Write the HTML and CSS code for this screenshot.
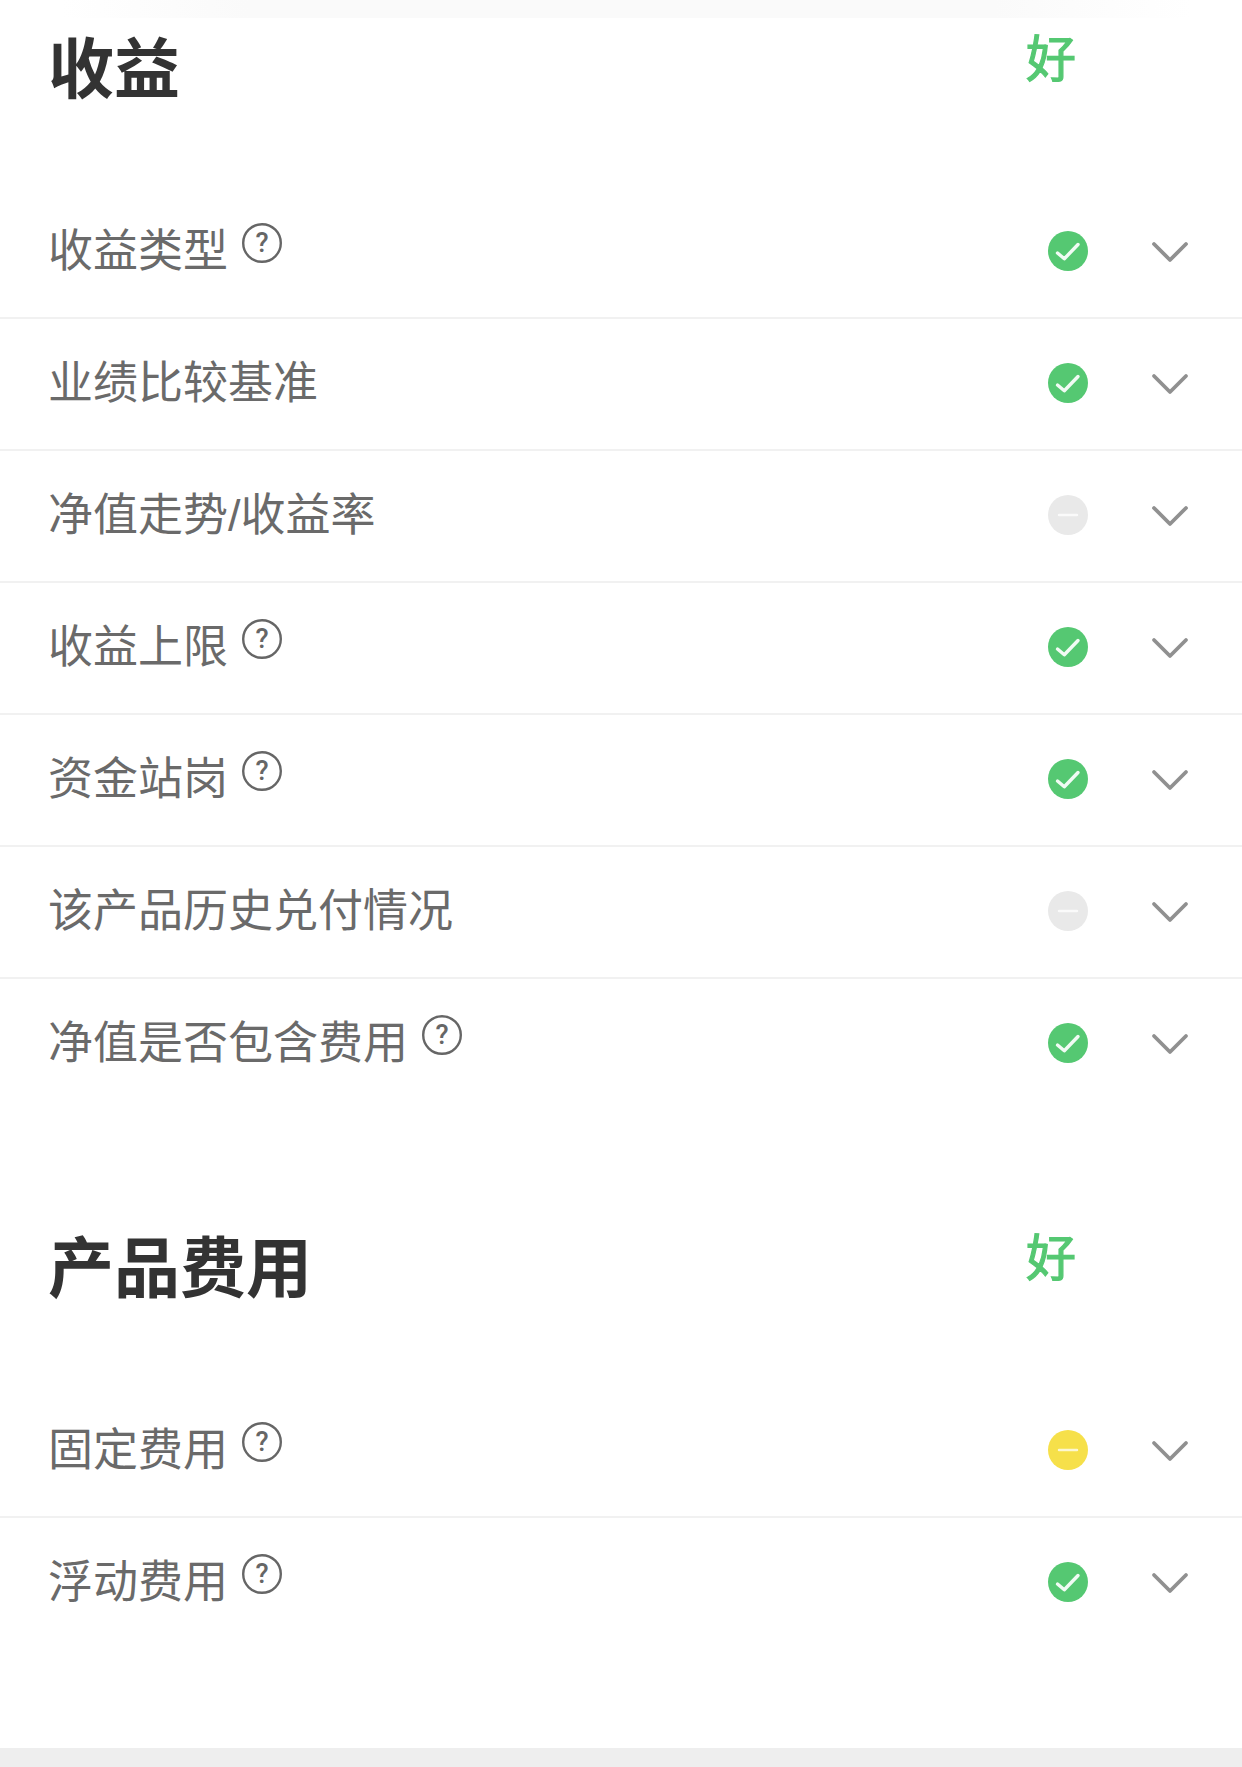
FILE: index.html
```html
<!DOCTYPE html>
<html lang="zh-CN">
<head>
    <meta charset="UTF-8">
    <meta name="viewport" content="width=device-width, initial-scale=1.0">
    <title>收益</title>
    <link rel="stylesheet" href="styles.css">
</head>
<body>
    <svg class="icon-defs" width="0" height="0">
        <symbol id="i-help" viewBox="0 0 40 40">
            <circle cx="20" cy="20" r="18.8" fill="none" stroke="#666" stroke-width="2.4"/>
        </symbol>
        <symbol id="i-ok" viewBox="0 0 40 40">
            <circle cx="20" cy="20" r="20" fill="#55c872"/>
            <path d="M9.5 22 L16.3 27.8 L30 13.5" fill="none" stroke="#fff" stroke-width="3.4" stroke-linecap="round" stroke-linejoin="round" opacity="0.92"/>
        </symbol>
        <symbol id="i-none" viewBox="0 0 40 40">
            <circle cx="20" cy="20" r="20" fill="#e9e9e9"/>
            <path d="M11 20 H29" stroke="#fff" stroke-width="2.5" stroke-linecap="round" opacity="0.8"/>
        </symbol>
        <symbol id="i-warn" viewBox="0 0 40 40">
            <circle cx="20" cy="20" r="20" fill="#f6e04a"/>
            <path d="M11 20 H29" stroke="#fff" stroke-width="2.5" stroke-linecap="round" opacity="0.75"/>
        </symbol>
        <symbol id="i-down" viewBox="0 0 38 22">
            <path d="M3 3 L19 19 L35 3" fill="none" stroke="#909090" stroke-width="3.8" stroke-linecap="round" stroke-linejoin="round"/>
        </symbol>
    </svg>

    <div class="top-strip"></div>

    <section class="section">
        <div class="section-head">
            <h2 class="section-title">收益</h2>
            <span class="section-grade">好</span>
        </div>
        <div class="row">
            <span class="row-label">收益类型</span>
            <span class="help"><svg class="help-ring"><use href="#i-help"/></svg><span class="help-mark">?</span></span>
            <svg class="status"><use href="#i-ok"/></svg>
            <svg class="chevron"><use href="#i-down"/></svg>
        </div>
        <div class="row">
            <span class="row-label">业绩比较基准</span>
            <svg class="status"><use href="#i-ok"/></svg>
            <svg class="chevron"><use href="#i-down"/></svg>
        </div>
        <div class="row">
            <span class="row-label">净值走势/收益率</span>
            <svg class="status"><use href="#i-none"/></svg>
            <svg class="chevron"><use href="#i-down"/></svg>
        </div>
        <div class="row">
            <span class="row-label">收益上限</span>
            <span class="help"><svg class="help-ring"><use href="#i-help"/></svg><span class="help-mark">?</span></span>
            <svg class="status"><use href="#i-ok"/></svg>
            <svg class="chevron"><use href="#i-down"/></svg>
        </div>
        <div class="row">
            <span class="row-label">资金站岗</span>
            <span class="help"><svg class="help-ring"><use href="#i-help"/></svg><span class="help-mark">?</span></span>
            <svg class="status"><use href="#i-ok"/></svg>
            <svg class="chevron"><use href="#i-down"/></svg>
        </div>
        <div class="row">
            <span class="row-label">该产品历史兑付情况</span>
            <svg class="status"><use href="#i-none"/></svg>
            <svg class="chevron"><use href="#i-down"/></svg>
        </div>
        <div class="row">
            <span class="row-label">净值是否包含费用</span>
            <span class="help"><svg class="help-ring"><use href="#i-help"/></svg><span class="help-mark">?</span></span>
            <svg class="status"><use href="#i-ok"/></svg>
            <svg class="chevron"><use href="#i-down"/></svg>
        </div>
    </section>

    <section class="section section-fees">
        <div class="section-head">
            <h2 class="section-title">产品费用</h2>
            <span class="section-grade">好</span>
        </div>
        <div class="row">
            <span class="row-label">固定费用</span>
            <span class="help"><svg class="help-ring"><use href="#i-help"/></svg><span class="help-mark">?</span></span>
            <svg class="status"><use href="#i-warn"/></svg>
            <svg class="chevron"><use href="#i-down"/></svg>
        </div>
        <div class="row">
            <span class="row-label">浮动费用</span>
            <span class="help"><svg class="help-ring"><use href="#i-help"/></svg><span class="help-mark">?</span></span>
            <svg class="status"><use href="#i-ok"/></svg>
            <svg class="chevron"><use href="#i-down"/></svg>
        </div>
    </section>

    <div class="bottom-band"></div>
</body>
</html>
```

FILE: styles.css
```css
* {
    margin: 0;
    padding: 0;
    box-sizing: border-box;
}

body {
    font-family: "Liberation Sans", "Noto Sans CJK SC", sans-serif;
    background: #fff;
    height: 1767px;
    overflow: hidden;
    display: flex;
    flex-direction: column;
}

.icon-defs {
    position: absolute;
}

.top-strip {
    height: 18px;
    background: linear-gradient(90deg, #fff 5%, #fafafa 20%, #fafafa 80%, #fff 96%);
}

.section-head {
    height: 169px;
    padding: 0 166px 0 48px;
    display: flex;
    align-items: flex-start;
    justify-content: space-between;
}

.section-title {
    font-size: 66px;
    font-weight: 700;
    line-height: 104px;
    color: #333;
}

.section-grade {
    font-size: 50px;
    line-height: 84px;
    color: #55c872;
    -webkit-text-stroke: 1.2px #55c872;
}

.row {
    height: 132px;
    padding: 0 53px 2px 48px;
    display: flex;
    align-items: center;
    border-bottom: 2px solid #f1f1f1;
}

.row:last-child {
    padding-bottom: 4px;
    border-bottom: none;
}

.row-label {
    margin-top: 2px;
    font-size: 45px;
    line-height: 60px;
    color: #6a6a6a;
}

.help {
    width: 40px;
    height: 40px;
    margin: -16px 0 0 14px;
    position: relative;
    display: flex;
    align-items: center;
    justify-content: center;
}

.help-ring {
    position: absolute;
    inset: 0;
    width: 40px;
    height: 40px;
}

.help-mark {
    font-family: Roboto, sans-serif;
    font-size: 27px;
    font-weight: 500;
    line-height: 1;
    color: #666;
}

.status {
    width: 40px;
    height: 40px;
    margin-left: auto;
}

.chevron {
    width: 38px;
    height: 22px;
    margin: 1px 0 0 63px;
}

.section-fees {
    margin-top: 106px;
}

.bottom-band {
    margin-top: auto;
    height: 19px;
    background: #eee;
}
```
